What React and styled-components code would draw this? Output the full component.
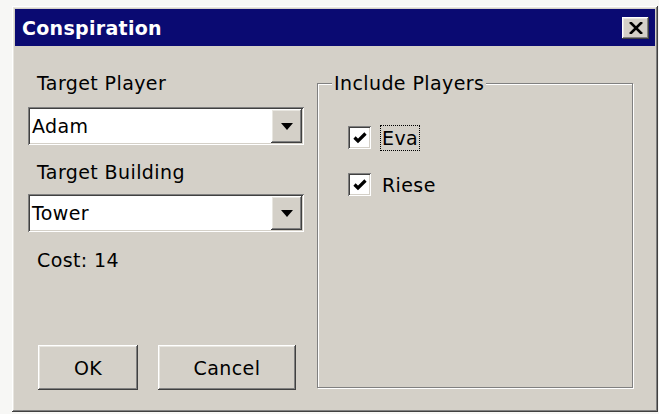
import React from "react";
import styled, { createGlobalStyle } from "styled-components";

const GlobalStyle = createGlobalStyle`
  html, body {
    margin: 0;
    padding: 0;
    background: #f7f7f5;
  }
  body {
    font-family: "DejaVu Sans", "Liberation Sans", sans-serif;
    font-size: 19px;
    letter-spacing: 0.4px;
    color: #000;
  }
`;

const raised = `
  box-shadow: inset -1px -1px 0 #404040, inset 1px 1px 0 #ffffff,
    inset -2px -2px 0 #808080, inset 2px 2px 0 #e8e6e0;
`;

const sunken = `
  box-shadow: inset 1px 1px 0 #808080, inset -1px -1px 0 #ffffff,
    inset 2px 2px 0 #404040, inset -2px -2px 0 #d4d0c8;
`;

const Page = styled.div`
  padding: 6px 1px 2px 12px;
  width: 659px;
  height: 414px;
  box-sizing: border-box;
`;

const Window = styled.div`
  width: 100%;
  height: 100%;
  background: #d4d0c8;
  padding: 3px;
  box-sizing: border-box;
  display: flex;
  flex-direction: column;
  ${raised}
`;

const TitleBar = styled.div`
  height: 37px;
  flex-shrink: 0;
  background: #0a0a72;
  display: flex;
  align-items: center;
  justify-content: space-between;
  padding: 0 6px 0 7px;
`;

const Title = styled.span`
  color: #fff;
  font-weight: bold;
  font-size: 19px;
  letter-spacing: 0.3px;
  margin-top: 1px;
`;

const CloseButton = styled.button`
  width: 27px;
  height: 22px;
  border: none;
  padding: 0;
  background: #d4d0c8;
  display: flex;
  align-items: center;
  justify-content: center;
  ${raised}
`;

const Body = styled.div`
  flex: 1;
  display: flex;
  padding-left: 13px;
`;

const LeftColumn = styled.div`
  width: 276px;
  display: flex;
  flex-direction: column;
`;

const Label = styled.div`
  height: 22px;
  line-height: 22px;
  padding-left: 9px;
  margin-top: ${(p) => p.$top}px;
`;

const Combo = styled.div`
  height: 38px;
  margin-top: ${(p) => p.$top}px;
  background: #fff;
  display: flex;
  align-items: center;
  padding: 2px;
  box-sizing: border-box;
  ${sunken}
`;

const ComboValue = styled.span`
  flex: 1;
  padding-left: 2px;
`;

const ComboArrow = styled.div`
  width: 31px;
  height: 34px;
  background: #d4d0c8;
  display: flex;
  align-items: center;
  justify-content: center;
  ${raised}
`;

const ButtonRow = styled.div`
  display: flex;
  gap: 20px;
  margin-top: 74px;
  padding-left: 10px;
`;

const PushButton = styled.button`
  width: ${(p) => p.$w}px;
  height: 45px;
  border: none;
  background: #d4d0c8;
  font-family: inherit;
  font-size: 19px;
  letter-spacing: 0.4px;
  color: #000;
  ${raised}
`;

const GroupBox = styled.div`
  position: relative;
  width: 316px;
  height: 305px;
  margin: 37px 0 0 13px;
  box-sizing: border-box;
  border: 1px solid #808080;
  box-shadow: inset 1px 1px 0 #fff, 1px 1px 0 #fff;
  padding: 40px 0 0 30px;
  display: flex;
  flex-direction: column;
  gap: 20px;
`;

const Legend = styled.span`
  position: absolute;
  top: -12px;
  left: 14px;
  padding: 0 2px;
  line-height: 22px;
  background: #d4d0c8;
`;

const CheckRow = styled.label`
  display: flex;
  align-items: center;
  gap: 9px;
  height: 27px;
`;

const CheckBox = styled.span`
  width: 23px;
  height: 23px;
  background: #fff;
  display: flex;
  align-items: center;
  justify-content: center;
  ${sunken}
`;

const CheckText = styled.span`
  padding: 1px 1px;
  border: 1px dotted ${(p) => (p.$focus ? "#000" : "transparent")};
`;

const Arrow = () => (
  <svg width="12" height="7" viewBox="0 0 12 7">
    <path d="M0 0 H12 L6 7 Z" fill="#000" />
  </svg>
);

const Check = () => (
  <svg width="14" height="12" viewBox="0 0 14 12">
    <path d="M1.5 5.5 L5 9 L12.5 1.5" stroke="#000" strokeWidth="3.2" fill="none" />
  </svg>
);

const CloseIcon = () => (
  <svg width="14" height="12" viewBox="0 0 14 12">
    <path d="M1 0 L13 12 M13 0 L1 12" stroke="#000" strokeWidth="2.6" />
  </svg>
);

const players = [
  { name: "Eva", focus: true },
  { name: "Riese", focus: false },
];

const App = () => {
  return (
    <Page>
      <GlobalStyle />
      <Window>
        <TitleBar>
          <Title>Conspiration</Title>
          <CloseButton>
            <CloseIcon />
          </CloseButton>
        </TitleBar>
        <Body>
          <LeftColumn>
            <Label $top={26}>Target Player</Label>
            <Combo $top={13}>
              <ComboValue>Adam</ComboValue>
              <ComboArrow>
                <Arrow />
              </ComboArrow>
            </Combo>
            <Label $top={16}>Target Building</Label>
            <Combo $top={11}>
              <ComboValue>Tower</ComboValue>
              <ComboArrow>
                <Arrow />
              </ComboArrow>
            </Combo>
            <Label $top={17}>Cost: 14</Label>
            <ButtonRow>
              <PushButton $w={100}>OK</PushButton>
              <PushButton $w={138}>Cancel</PushButton>
            </ButtonRow>
          </LeftColumn>
          <GroupBox>
            <Legend>Include Players</Legend>
            {players.map((p) => (
              <CheckRow key={p.name}>
                <CheckBox>
                  <Check />
                </CheckBox>
                <CheckText $focus={p.focus}>{p.name}</CheckText>
              </CheckRow>
            ))}
          </GroupBox>
        </Body>
      </Window>
    </Page>
  );
};

export default App;
